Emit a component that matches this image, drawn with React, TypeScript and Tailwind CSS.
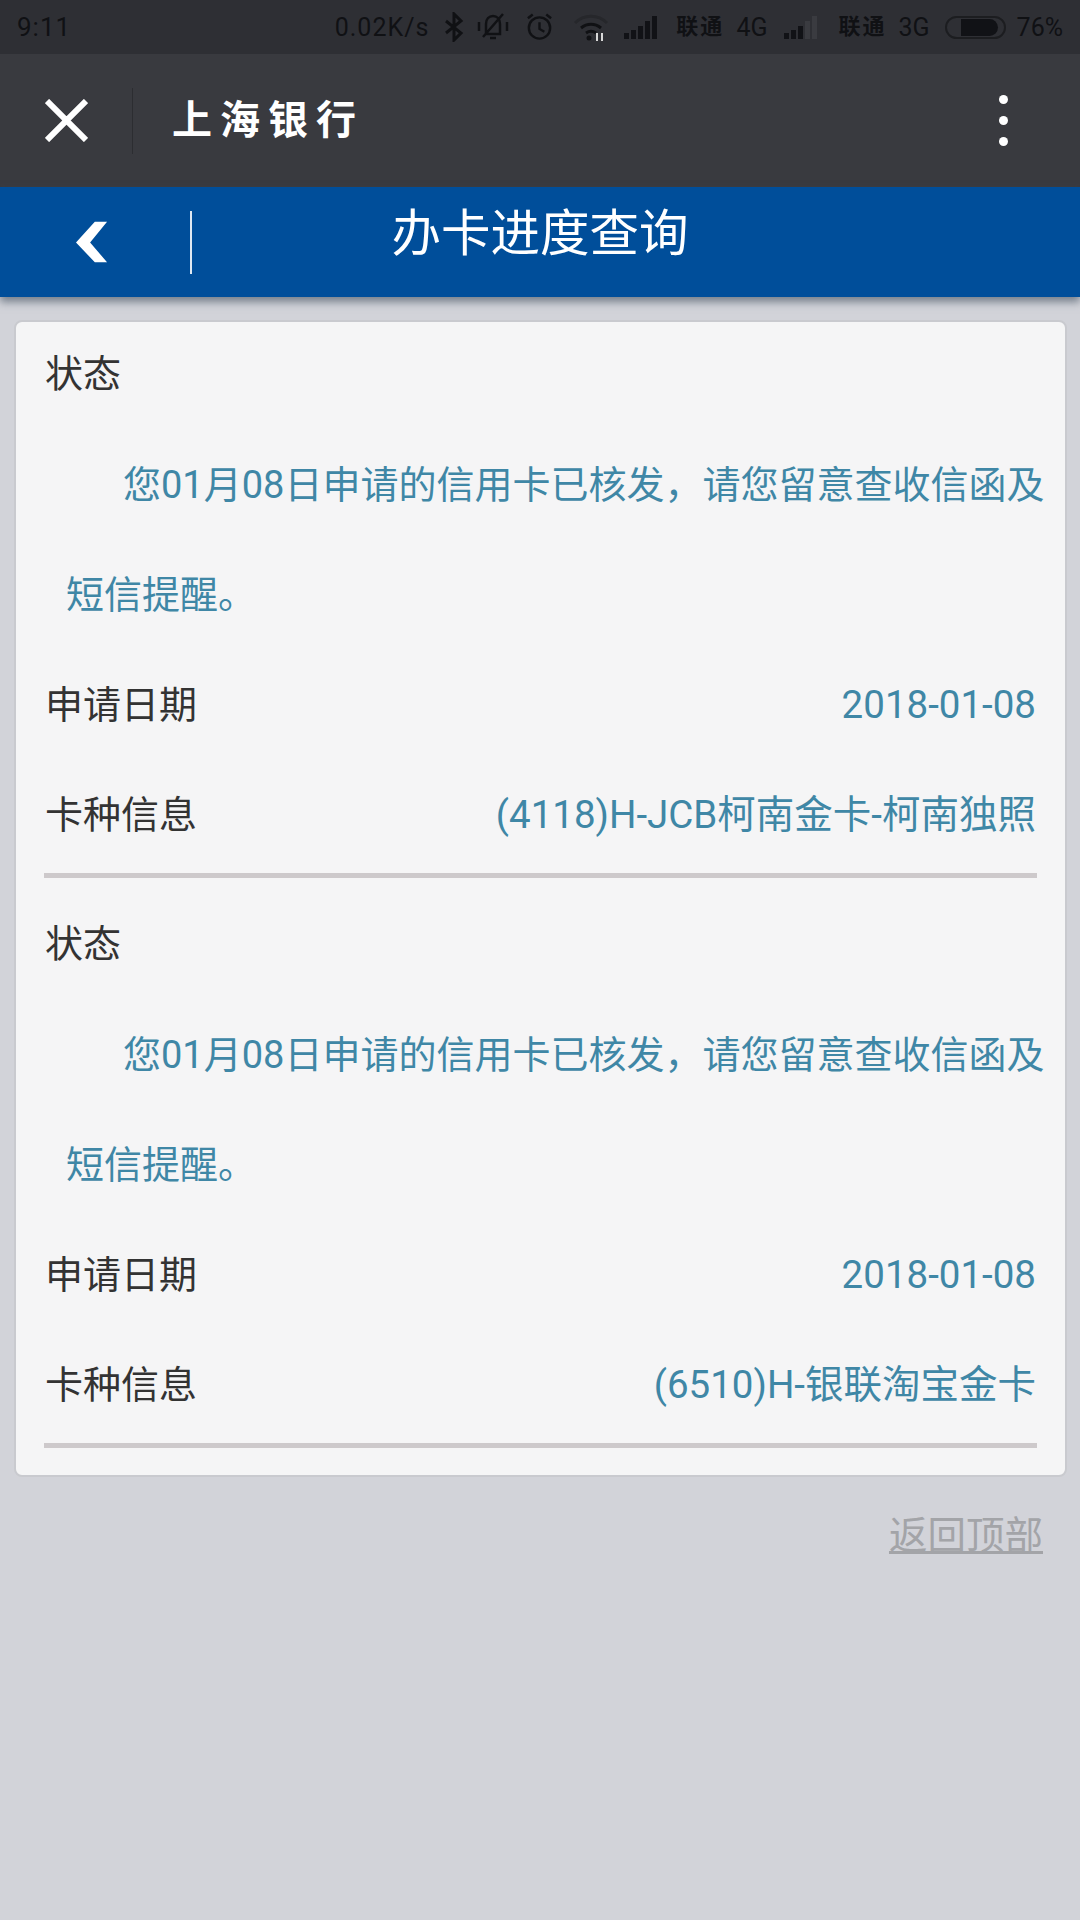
import React from "react";

const font = { fontFamily: '"Roboto", "Noto Sans CJK SC", sans-serif' };

function Signal({ active }: { active: number }) {
  const heights = [6, 9, 13, 18, 23];
  return (
    <div className="flex items-end gap-[2px] h-[23px]">
      {heights.map((h, i) => (
        <div
          key={i}
          className={i < active ? "w-[5px] bg-[#111216]" : "w-[5px] bg-[#3a3b40]"}
          style={{ height: h }}
        />
      ))}
    </div>
  );
}

function StatusBar() {
  return (
    <div className="h-[54px] bg-[#2e2f34] flex items-center pl-[17px] pr-[17px] text-[#101114] text-[25px] leading-none">
      <span className="text-[26px] tracking-[1px]">9:11</span>
      <div className="ml-auto flex items-center">
        <span className="tracking-[1px]">0.02K/s</span>
        <svg className="ml-[15px]" width="20" height="30" viewBox="0 0 20 30" fill="none" stroke="#101114" strokeWidth="3">
          <path d="M2 9l15 12-7 7V2l7 7L2 21" />
        </svg>
        <svg className="ml-[12px]" width="34" height="32" viewBox="0 0 34 32" fill="none" stroke="#101114" strokeWidth="2.5">
          <path d="M10 23V13c0-5 3-8 7-8s7 3 7 8v10zM14 27h6M7 26L27 3M3 11v9M31 11v9" />
        </svg>
        <svg className="ml-[15px]" width="29" height="30" viewBox="0 0 30 30" fill="none" stroke="#101114" strokeWidth="2.5">
          <circle cx="15" cy="16" r="11" />
          <path d="M15 10v7l5 3M3 6l5-4M27 6l-5-4" />
        </svg>
        <svg className="ml-[19px]" width="36" height="28" viewBox="0 0 34 28" fill="none">
          <path d="M1 10c9-9 23-9 32 0" stroke="#26272b" strokeWidth="3" />
          <path d="M7 15c6-5 14-5 20 0" stroke="#101114" strokeWidth="3" />
          <path d="M12 20c3-2 7-2 10 0" stroke="#101114" strokeWidth="3" />
          <circle cx="15" cy="25" r="2.5" fill="#101114" />
          <path d="M23 20v8M28 20v8" stroke="#d8d8d8" strokeWidth="2" />
        </svg>
        <div className="ml-[15px]"><Signal active={5} /></div>
        <span className="ml-[19px] font-bold text-[22px] tracking-[2px]">联通</span>
        <span className="ml-[12px]">4G</span>
        <div className="ml-[17px]"><Signal active={3} /></div>
        <span className="ml-[21px] font-bold text-[22px] tracking-[2px]">联通</span>
        <span className="ml-[12px]">3G</span>
        <div className="ml-[15px] w-[61px] h-[23px] rounded-full border-2 border-[#1c1d20] flex justify-end items-center pr-[6px]">
          <div className="w-[37px] h-[17px] rounded-r-full bg-[#111216]" />
        </div>
        <span className="ml-[11px]">76%</span>
      </div>
    </div>
  );
}

function WechatBar() {
  return (
    <div className="h-[133px] bg-[#393a3f] flex items-center">
      <div className="w-[133px] h-[66px] flex items-center border-r border-[#2c2d31] pl-[45px]">
        <svg width="43" height="43" viewBox="0 0 43 43" fill="none" stroke="white" strokeWidth="6">
          <path d="M2 2l39 39M41 2L2 41" />
        </svg>
      </div>
      <span className="ml-[39px] text-white text-[40px] font-bold tracking-[8px] leading-none">上海银行</span>
      <div className="ml-auto mr-[72px] flex flex-col gap-[12px]">
        <div className="w-[9px] h-[9px] rounded-full bg-white" />
        <div className="w-[9px] h-[9px] rounded-full bg-white" />
        <div className="w-[9px] h-[9px] rounded-full bg-white" />
      </div>
    </div>
  );
}

function TitleBar() {
  return (
    <div className="relative z-10 h-[110px] bg-[#004e9a] shadow-[0_5px_8px_rgba(70,85,100,0.65)] flex">
      <div className="w-[192px] h-[63px] mt-[24px] border-r-2 border-[#dfe8f2] flex items-center pl-[76px]">
        <svg width="32" height="43" viewBox="0 0 34 44" fill="white">
          <path d="M33 0H20L0 22l20 21h13L15 22z" />
        </svg>
      </div>
      <h1 className="absolute inset-x-0 top-[17px] text-center text-white text-[49.5px] leading-[60px]">办卡进度查询</h1>
    </div>
  );
}

function Row({ label, value }: { label: string; value: string }) {
  return (
    <div className="h-[110px] flex items-center justify-between pl-[29px] pr-[29px]">
      <span className="text-[#333333]">{label}</span>
      <span className="text-[#3f87a6] text-[38.5px]">{value}</span>
    </div>
  );
}

function Record({ card }: { card: string }) {
  return (
    <div>
      <div className="h-[105px] mb-[3px] flex items-center pl-[29px] text-[#333333]">状态</div>
      <p className="pl-[50px] pr-[10px] text-[#3f87a6] leading-[110px] indent-[57px]">
        您01月08日申请的信用卡已核发，请您留意查收信函及短信提醒。
      </p>
      <Row label="申请日期" value="2018-01-08" />
      <Row label="卡种信息" value={card} />
      <div className="mx-[28px] mt-[3px] mb-[14px] h-[5px] bg-[#cdc9cb]" />
    </div>
  );
}

export default function App() {
  return (
    <div className="w-[1080px] h-[1920px] bg-[#d2d3d9] overflow-hidden" style={font}>
      <StatusBar />
      <WechatBar />
      <TitleBar />
      <div className="ml-[14px] mr-[13px] mt-[23px] bg-[#f5f5f6] rounded-[8px] border-2 border-[#c9cacf] text-[38px] pb-[13px]">
        <Record card="(4118)H-JCB柯南金卡-柯南独照" />
        <Record card="(6510)H-银联淘宝金卡" />
      </div>
      <div className="flex justify-end pr-[37px] mt-[34px]">
        <a className="text-[#a3a4a8] text-[38.5px] underline leading-[50px]">返回顶部</a>
      </div>
    </div>
  );
}
